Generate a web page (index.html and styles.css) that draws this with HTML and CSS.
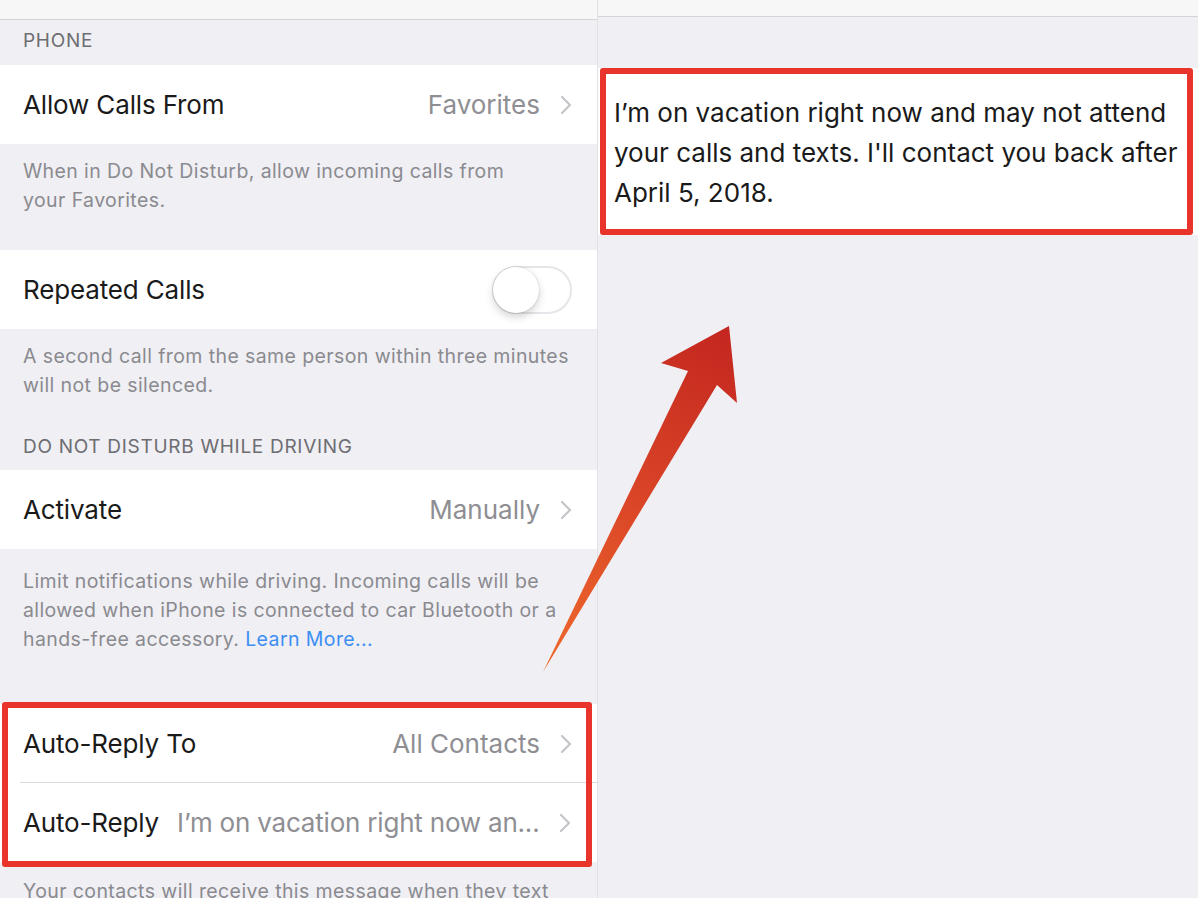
FILE: index.html
```html
<!DOCTYPE html>
<html lang="en">
<head>
<meta charset="utf-8">
<title>Do Not Disturb</title>
<link rel="stylesheet" href="styles.css">
</head>
<body>
<main class="page">
  <section class="pane pane-left">
    <div class="navbar navbar-left"></div>

    <div class="group-header group-header-first">PHONE</div>
    <div class="cell">
      <span class="label">Allow Calls From</span>
      <span class="value">Favorites</span>
      <svg class="chevron" viewBox="0 0 12 20" width="12" height="20"><polyline points="2,2 10,10 2,18"/></svg>
    </div>
    <p class="footer footer-gap">When in Do Not Disturb, allow incoming calls from<br>your Favorites.</p>

    <div class="cell">
      <span class="label">Repeated Calls</span>
      <span class="toggle"><span class="knob"></span></span>
    </div>
    <p class="footer">A second call from the same person within three minutes<br>will not be silenced.</p>

    <div class="group-header group-header-mid">DO NOT DISTURB WHILE DRIVING</div>
    <div class="cell">
      <span class="label">Activate</span>
      <span class="value">Manually</span>
      <svg class="chevron" viewBox="0 0 12 20" width="12" height="20"><polyline points="2,2 10,10 2,18"/></svg>
    </div>
    <p class="footer footer-long">Limit notifications while driving. Incoming calls will be<br>allowed when iPhone is connected to car Bluetooth or a<br>hands-free accessory. <span class="link">Learn More...</span></p>

    <div class="group">
      <div class="cell cell-sep">
        <span class="label">Auto-Reply To</span>
        <span class="value">All Contacts</span>
        <svg class="chevron" viewBox="0 0 12 20" width="12" height="20"><polyline points="2,2 10,10 2,18"/></svg>
      </div>
      <div class="cell">
        <span class="label">Auto-Reply</span>
        <span class="value value-msg">I’m on vacation right now an...</span>
        <svg class="chevron" viewBox="0 0 12 20" width="12" height="20"><polyline points="2,2 10,10 2,18"/></svg>
      </div>
      <div class="highlight highlight-left"></div>
    </div>
    <p class="footer footer-last">Your contacts will receive this message when they text</p>
  </section>

  <section class="pane pane-right">
    <div class="navbar navbar-right"></div>
    <div class="message">
      <p class="message-text">I’m on vacation right now and may not attend<br>your calls and texts. I'll contact you back after<br>April 5, 2018.</p>
      <div class="highlight highlight-right"></div>
    </div>
  </section>

  <svg class="arrow" width="1198" height="898" viewBox="0 0 1198 898">
    <defs>
      <linearGradient id="arrowGrad" x1="543" y1="672" x2="729" y2="326" gradientUnits="userSpaceOnUse">
        <stop offset="0" stop-color="#ef6a2c"/>
        <stop offset="0.5" stop-color="#da4527"/>
        <stop offset="1" stop-color="#c3261f"/>
      </linearGradient>
    </defs>
    <polygon points="543,672 717,385 737,403 729,326 661,363 688,371" fill="url(#arrowGrad)"/>
  </svg>
</main>
</body>
</html>
```
FILE: styles.css
```css
* { box-sizing: border-box; }

html, body {
  margin: 0;
  padding: 0;
  background: #efeff4;
}

body {
  font-family: "Inter", "Noto Sans", "Liberation Sans", sans-serif;
  color: #111;
}

.page {
  position: relative;
  width: 1198px;
  height: 898px;
  overflow: hidden;
  display: grid;
  grid-template-columns: 598px 600px;
  background: #efeff4;
}

.pane {
  display: flex;
  flex-direction: column;
  min-width: 0;
}

.pane-left {
  border-right: 1px solid #e2e2e6;
}

.navbar {
  background: #f7f7f8;
  border-bottom: 1px solid #d4d4d8;
  flex: none;
}

.navbar-left { height: 20px; }
.navbar-right { height: 17px; }

.group-header {
  margin: 0;
  padding: 0 23px;
  font-size: 19px;
  line-height: 29px;
  color: #6d6d72;
  letter-spacing: 0.7px;
  white-space: nowrap;
}

.group-header-first { padding-top: 6px; padding-bottom: 10px; }
.group-header-mid { padding-top: 32px; padding-bottom: 9px; }

.cell {
  height: 79px;
  flex: none;
  display: flex;
  align-items: center;
  padding: 0 25px 0 23px;
  background: #fff;
  position: relative;
}

.cell-sep::after {
  content: "";
  position: absolute;
  left: 20px;
  right: 0;
  bottom: 0;
  height: 1px;
  background: #d9d9dd;
}

.label {
  font-size: 26px;
  color: #1a1a1a;
  white-space: nowrap;
  letter-spacing: -0.15px;
}

.value {
  margin-left: auto;
  font-size: 26px;
  color: #8e8e93;
  white-space: nowrap;
}

.value-msg {
  margin-left: 18px;
  letter-spacing: -0.2px;
}

.chevron {
  flex: none;
  margin-left: 20px;
  fill: none;
  stroke: #c4c4c9;
  stroke-width: 2.2;
  stroke-linecap: round;
  stroke-linejoin: round;
}

.toggle {
  margin-left: auto;
  width: 80px;
  height: 48px;
  border-radius: 24px;
  border: 2px solid #e6e6ea;
  background: #fff;
  position: relative;
  flex: none;
}

.knob {
  position: absolute;
  left: -1px;
  top: -1px;
  width: 46px;
  height: 46px;
  border-radius: 50%;
  background: #fff;
  box-shadow: 0 4px 8px rgba(0,0,0,0.18), 0 0 0 1px rgba(0,0,0,0.06);
}

.footer {
  margin: 0;
  padding: 13px 23px 0;
  font-size: 19.5px;
  line-height: 29px;
  color: #8a8a8f;
  letter-spacing: 0.4px;
  white-space: nowrap;
}

.footer-gap { padding-bottom: 35px; }
.footer-long { padding-top: 18px; padding-bottom: 50px; }
.footer-last { padding-top: 15px; }

.link { color: #3c8ef3; }

.group {
  position: relative;
  flex: none;
}

.highlight {
  position: absolute;
  border: 6px solid #e8342b;
  border-radius: 3px;
  pointer-events: none;
}

.highlight-left {
  top: -2px;
  left: 2px;
  right: 5px;
  bottom: -5px;
}

.message {
  position: relative;
  margin-top: 51px;
  background: #fff;
  padding: 25px 16px 22px;
}

.message-text {
  margin: 0;
  font-size: 26px;
  line-height: 40px;
  color: #1a1a1a;
  white-space: nowrap;
}

.highlight-right {
  top: 0;
  left: 2px;
  right: 5px;
  bottom: 0;
}

.arrow {
  position: absolute;
  left: 0;
  top: 0;
  pointer-events: none;
}
```
